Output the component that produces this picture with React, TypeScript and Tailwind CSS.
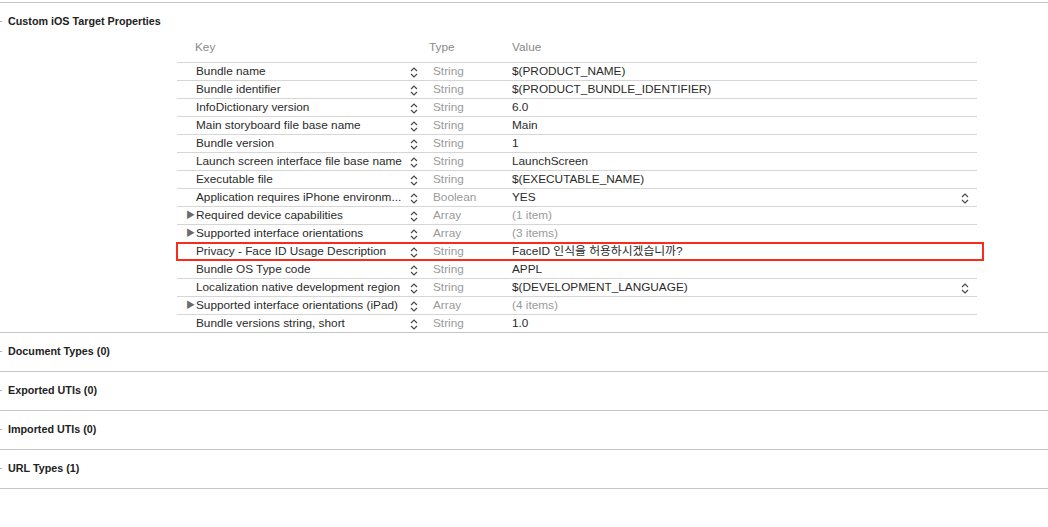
import React from "react";

type Row = {
  key: string;
  type: string;
  value: string;
  expandable?: boolean;
  muted?: boolean;
  popup?: boolean;
  highlight?: boolean;
};

const rows: Row[] = [
  { key: "Bundle name", type: "String", value: "$(PRODUCT_NAME)" },
  { key: "Bundle identifier", type: "String", value: "$(PRODUCT_BUNDLE_IDENTIFIER)" },
  { key: "InfoDictionary version", type: "String", value: "6.0" },
  { key: "Main storyboard file base name", type: "String", value: "Main" },
  { key: "Bundle version", type: "String", value: "1" },
  { key: "Launch screen interface file base name", type: "String", value: "LaunchScreen" },
  { key: "Executable file", type: "String", value: "$(EXECUTABLE_NAME)" },
  { key: "Application requires iPhone environm...", type: "Boolean", value: "YES", popup: true },
  { key: "Required device capabilities", type: "Array", value: "(1 item)", expandable: true, muted: true },
  { key: "Supported interface orientations", type: "Array", value: "(3 items)", expandable: true, muted: true },
  { key: "Privacy - Face ID Usage Description", type: "String", value: "FaceID 인식을 허용하시겠습니까?", highlight: true },
  { key: "Bundle OS Type code", type: "String", value: "APPL" },
  { key: "Localization native development region", type: "String", value: "$(DEVELOPMENT_LANGUAGE)", popup: true },
  { key: "Supported interface orientations (iPad)", type: "Array", value: "(4 items)", expandable: true, muted: true },
  { key: "Bundle versions string, short", type: "String", value: "1.0" },
];

const Stepper = () => (
  <svg width="8" height="13" viewBox="0 0 8 13" className="shrink-0 mt-[2px]">
    <path d="M1 5 L4 2 L7 5" fill="none" stroke="#4a4a4a" strokeWidth="1.2" />
    <path d="M1 8 L4 11 L7 8" fill="none" stroke="#4a4a4a" strokeWidth="1.2" />
  </svg>
);

const Section = ({ title }: { title: string }) => (
  <div className="h-[39px] pb-[2px] border-b border-[#c6c6c6] flex items-center">
    <div className="w-[2px] h-[1px] bg-[#b0b0b0] mr-[6px]" />
    <span className="font-bold text-[10.75px] text-[#222]">{title}</span>
  </div>
);

export default function App() {
  return (
    <div
      className="w-[1048px] h-[527px] bg-white overflow-hidden text-[#2a2a2a]"
      style={{ fontFamily: '"Liberation Sans", "Noto Sans CJK KR", Arial, sans-serif' }}
    >
      <div className="h-[2px]" />
      <div className="border-t border-[#c6c6c6]" />

      {/* Custom iOS Target Properties */}
      <div className="border-b border-[#c6c6c6]">
        <div className="h-[36px] flex items-center">
          <div className="w-[2px] h-[1px] bg-[#b0b0b0] mr-[6px]" />
          <span className="font-bold text-[10.75px] text-[#222]">Custom iOS Target Properties</span>
        </div>

        <div className="ml-[177px] w-[800px] text-[11.8px]">
          <div className="h-[24px] pt-[1px] pb-[6px] flex items-center border-b border-[#d6d6d6] text-[#8a8a8a]">
            <span className="w-[252px] pl-[18px]">Key</span>
            <span className="w-[83px]">Type</span>
            <span>Value</span>
          </div>

          {rows.map((r, i) => (
            <div
              key={r.key}
              className={
                "relative flex items-center " +
                (i < rows.length - 1 ? "h-[18px] border-b border-[#d6d6d6]" : "h-[17px]")
              }
            >
              <div className="w-[229px] flex items-center pl-[9px]">
                <span className="w-[10px] shrink-0 text-[#6b6b6b] text-[9px] leading-none">
                  {r.expandable ? "▶" : ""}
                </span>
                <span className="whitespace-nowrap">{r.key}</span>
              </div>
              <div className="w-[22px] pl-[4px] flex items-center">
                <Stepper />
              </div>
              <div className="w-[79px] pl-[5px] text-[#9a9a9a]">{r.type}</div>
              <div className={"flex-1 pl-[5px] flex items-center " + (r.muted ? "text-[#9a9a9a]" : "")}>
                <span className="flex-1 whitespace-nowrap">{r.value}</span>
                {r.popup && (
                  <span className="pr-[8px] flex items-center">
                    <Stepper />
                  </span>
                )}
              </div>
              {r.highlight && (
                <div className="absolute top-[-1px] bottom-[-1px] left-[-1px] right-[-7px] border-2 border-[#fb2b1c] pointer-events-none" />
              )}
            </div>
          ))}
        </div>
      </div>

      <Section title="Document Types (0)" />
      <Section title="Exported UTIs (0)" />
      <Section title="Imported UTIs (0)" />
      <Section title="URL Types (1)" />
    </div>
  );
}
